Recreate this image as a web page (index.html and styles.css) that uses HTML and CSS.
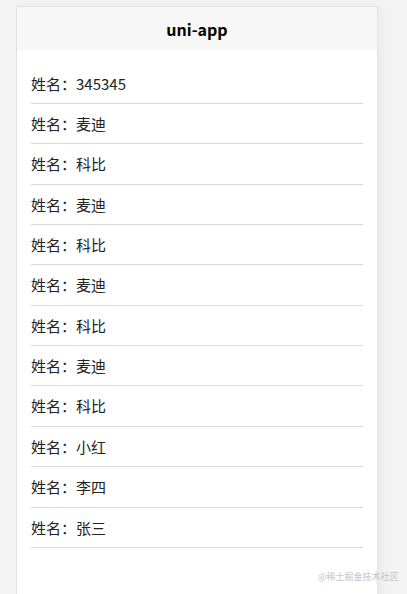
FILE: index.html
```html
<!DOCTYPE html>
<html lang="zh-CN">
<head>
    <meta charset="UTF-8">
    <meta name="viewport" content="width=device-width, initial-scale=1.0">
    <title>uni-app</title>
    <link rel="stylesheet" href="styles.css">
</head>
<body>

<div class="phone">
    <header class="nav">
        <h1>uni-app</h1>
    </header>

    <ul class="list">
        <li class="item">姓名：345345</li>
        <li class="item">姓名：麦迪</li>
        <li class="item">姓名：科比</li>
        <li class="item">姓名：麦迪</li>
        <li class="item">姓名：科比</li>
        <li class="item">姓名：麦迪</li>
        <li class="item">姓名：科比</li>
        <li class="item">姓名：麦迪</li>
        <li class="item">姓名：科比</li>
        <li class="item">姓名：小红</li>
        <li class="item">姓名：李四</li>
        <li class="item">姓名：张三</li>
    </ul>
</div>

<div class="watermark">@稀土掘金技术社区</div>

</body>
</html>
```

FILE: styles.css
```css
body {
    font-family: "Noto Sans CJK SC", "Noto Sans", sans-serif;
    background-color: #f3f3f3;
    margin: 0;
    padding: 0;
    color: #333;
    height: 594px;
    overflow: hidden;
}
.phone {
    width: 360px;
    margin: 6px 0 0 16px;
    min-height: 600px;
    background-color: #fff;
    border: 1px solid #e2e2e2;
    box-shadow: 4px 0 10px rgba(0, 0, 0, 0.04);
}
.nav {
    height: 43px;
    background-color: #f7f7f7;
    display: flex;
    align-items: center;
    justify-content: center;
}
.nav h1 {
    margin: 0;
    font-size: 16px;
    font-weight: bold;
    color: #000;
}
.list {
    list-style: none;
    margin: 0;
    padding: 13.6px 14px 0 14px;
}
.item {
    height: 38.36px;
    line-height: 38.36px;
    padding-top: 1px;
    font-size: 15px;
    color: #222;
    border-bottom: 1px solid #d9d9d9;
}
.watermark {
    position: absolute;
    left: 318px;
    top: 570px;
    font-size: 9px;
    color: #c4c4c4;
    white-space: nowrap;
}
```
